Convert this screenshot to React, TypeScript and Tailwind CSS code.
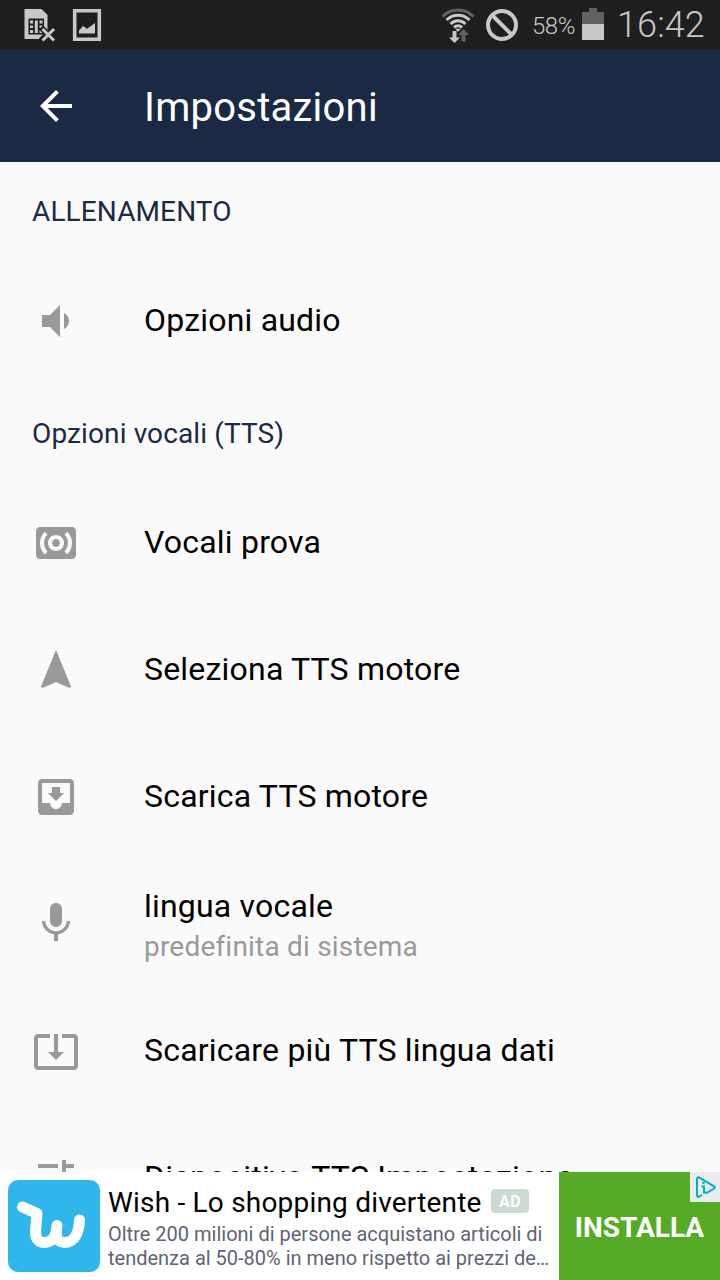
import type { ReactNode } from 'react';
import clsx from 'clsx';
import {
  MdArrowBack,
  MdKeyboardVoice,
  MdMoveToInbox,
  MdNavigation,
  MdSurroundSound,
  MdSystemUpdateAlt,
  MdTune,
  MdVolumeDown,
} from 'react-icons/md';

interface SettingProps {
  icon: ReactNode;
  title: string;
  subtitle?: string;
}

const voiceSettings: SettingProps[] = [
  { icon: <MdSurroundSound />, title: 'Vocali prova' },
  { icon: <MdNavigation />, title: 'Seleziona TTS motore' },
  { icon: <MdMoveToInbox />, title: 'Scarica TTS motore' },
  {
    icon: <MdKeyboardVoice />,
    title: 'lingua vocale',
    subtitle: 'predefinita di sistema',
  },
  { icon: <MdSystemUpdateAlt />, title: 'Scaricare più TTS lingua dati' },
  { icon: <MdTune />, title: 'Dispositivo TTS Impostazione' },
];

function SimIcon() {
  return (
    <svg width="32" height="34" viewBox="0 0 32 34">
      <path d="M.5 1h17l6 6v24H.5z" fill="#c8c8c8" />
      <path d="M4.5 10.5H20v16H4.5z" fill="#1f1f1f" />
      <path
        d="M6 12.5h3v3H6zM6 17.5h3V20H6zM6 22h3v3H6zM10.8 12.5h3V25h-3zM15.5 12.5h3v3h-3zM15.5 17.5h3V20h-3zM15.5 22h3v3h-3z"
        fill="#c8c8c8"
      />
      <path d="M17 19.5l13 13M30 19.5l-13 13" stroke="#1f1f1f" strokeWidth="6" />
      <path d="M18.500 21L30 32.500M30 21L18.500 32.500" stroke="#c8c8c8" strokeWidth="3" />
    </svg>
  );
}

function PictureIcon() {
  return (
    <svg width="30" height="34" viewBox="0 0 30 34">
      <path d="M2.700 2.700h24.600v28.600H2.700z" fill="none" stroke="#c8c8c8" strokeWidth="3.600" />
      <path d="M7 25.500v-3l4-4.500 4 2.700L23 15v10.500z" fill="#c8c8c8" />
    </svg>
  );
}

function WifiIcon() {
  return (
    <svg width="34" height="38" viewBox="0 0 34 38" fill="none">
      <path d="M1.500 10.500C10 1.700 24 1.700 32.500 10.500" stroke="#636363" strokeWidth="3" />
      <g stroke="#c8c8c8" strokeWidth="3">
        <path d="M5.500 14c6.600-6.400 16.400-6.400 23 0" />
        <path d="M9.500 18c4.400-4.300 10.600-4.300 15 0" />
        <path d="M13 21.500c2.400-2.200 5.600-2.200 8 0" />
      </g>
      <path d="M14 22.700h6l-3 3z" fill="#c8c8c8" />
      <path d="M11.500 25h4v6.500H19L13.500 37 8 31.500h3.500z" fill="#c8c8c8" />
      <path d="M20.500 35.500V29H17l5.500-6 5.500 6h-3.500v6.500z" fill="#636363" />
    </svg>
  );
}

function BlockedIcon() {
  return (
    <svg width="32" height="32" viewBox="0 0 32 32" fill="none">
      <circle cx="16" cy="16" r="14" stroke="#c8c8c8" strokeWidth="4" />
      <path d="M6 6l20 20" stroke="#c8c8c8" strokeWidth="4" />
    </svg>
  );
}

function BatteryIcon() {
  return (
    <svg width="22" height="32" viewBox="0 0 22 32">
      <path d="M7 0h8v4h7v12H0V4h7z" fill="#636363" />
      <path d="M0 16h22v16H0z" fill="#c8c8c8" />
    </svg>
  );
}

function StatusBar() {
  return (
    <div className="flex h-[50px] shrink-0 items-center justify-between bg-[#1f1f1f] pl-6 pr-[15px] text-[#c8c8c8]">
      <div className="flex items-center gap-4">
        <SimIcon />
        <PictureIcon />
      </div>
      <div className="flex items-center">
        <WifiIcon />
        <span className="ml-[11px]">
          <BlockedIcon />
        </span>
        <span className="ml-[14px] w-[43px] whitespace-nowrap pt-0.5 text-2xl font-light tracking-[-0.5px]">
          58%
        </span>
        <span className="ml-[7px] -mt-0.5">
          <BatteryIcon />
        </span>
        <span className="ml-[13px] w-[88px] whitespace-nowrap text-[36px] font-light leading-none tracking-[0.1px]">
          16:42
        </span>
      </div>
    </div>
  );
}

function SectionTitle({ children }: { children: ReactNode }) {
  return (
    <h2 className="flex h-[95px] items-center px-8 pt-1 text-[28px] leading-8 tracking-[0.12px] text-[#1b2a44]">
      {children}
    </h2>
  );
}

function Setting({ icon, title, subtitle }: SettingProps) {
  return (
    <li className="flex h-[127px] shrink-0 gap-16 px-8">
      <span
        className={clsx(
          'h-12 text-5xl text-[#999999]',
          subtitle ? 'mt-[37px]' : 'mt-10',
        )}
      >
        {icon}
      </span>
      <div className={clsx('whitespace-nowrap', subtitle ? 'pt-[26px]' : 'pt-[43px]')}>
        <p className="text-[32px] leading-10 tracking-[0.2px] text-black">{title}</p>
        {subtitle && (
          <p className="text-[28px] leading-[41px] tracking-[0.2px] text-[#999999]">{subtitle}</p>
        )}
      </div>
    </li>
  );
}

function WishLogo() {
  return (
    <svg width="92" height="92" viewBox="0 0 92 92" className="shrink-0">
      <rect width="92" height="92" rx="10" fill="#2fb7ec" />
      <g
        fill="none"
        stroke="#fff"
        strokeWidth="11"
        strokeLinecap="round"
        strokeLinejoin="round"
      >
        <path d="M14.500 27L29 33.500L27.700 49C26.700 57 29.500 62.300 36 62.500C43.500 62.700 47.500 57 48.300 51L49 45.500" />
        <path d="M48.300 51C47.500 58 50.500 62.500 57 62.500C67 62.300 70.800 52 71.500 40" />
      </g>
    </svg>
  );
}

function AdBanner() {
  return (
    <aside className="flex h-[108px] shrink-0 bg-white">
      <div className="flex min-w-0 flex-1 gap-2 pl-2 pt-2">
        <WishLogo />
        <div className="min-w-0 whitespace-nowrap">
          <div className="flex h-[42px] items-center">
            <p className="w-[375px] pt-1 text-[28px] leading-8 tracking-[0.2px] text-black">
              Wish - Lo shopping divertente
            </p>
            <span className="ml-2 flex h-6 w-[38px] items-center justify-center rounded-[4px] bg-[#cbdbd1] pt-px text-base font-bold tracking-[0.5px] text-white">
              AD
            </span>
          </div>
          <p className="text-xl leading-6 text-[#5d6472]">
            Oltre 200 milioni di persone acquistano articoli di
            <br />
            tendenza al 50-80% in meno rispetto ai prezzi de…
          </p>
        </div>
      </div>
      <div className="relative flex w-[161px] items-center justify-center bg-[#55ab26] pt-1 text-[28px] font-bold text-white">
        INSTALLA
        <span className="absolute right-0 top-0 flex h-[30px] w-[30px] items-center justify-center bg-[#ebebeb]">
          <svg width="30" height="30" viewBox="0 0 30 30" fill="none" stroke="#00aecd">
            <path
              d="M12 23L9 24.700Q7 25.500 7 23V7.500Q7 4.500 9.500 5.700L24 14.300Q25.700 15.500 24 16.700L15.500 21.500"
              strokeWidth="2"
            />
            <path d="M11.500 14.500H14v6h2.500" strokeWidth="2" />
            <circle cx="13.500" cy="11" r="1.300" fill="#00aecd" stroke="none" />
          </svg>
        </span>
      </div>
    </aside>
  );
}

export default function App() {
  return (
    <div className="flex h-[1280px] w-[720px] flex-col overflow-hidden bg-[#fafafa] font-['Roboto',sans-serif]">
      <StatusBar />
      <header className="flex h-28 shrink-0 items-center gap-16 bg-[#1b2a44] px-8 text-white">
        <MdArrowBack className="size-12" />
        <h1 className="pt-1 text-[40px] leading-none tracking-[0.25px]">Impostazioni</h1>
      </header>

      <main className="min-h-0 flex-1 overflow-hidden">
        <SectionTitle>ALLENAMENTO</SectionTitle>
        <ul>
          <Setting icon={<MdVolumeDown />} title="Opzioni audio" />
        </ul>
        <SectionTitle>Opzioni vocali (TTS)</SectionTitle>
        <ul>
          {voiceSettings.map((item) => (
            <Setting key={item.title} {...item} />
          ))}
        </ul>
      </main>

      <AdBanner />
    </div>
  );
}
